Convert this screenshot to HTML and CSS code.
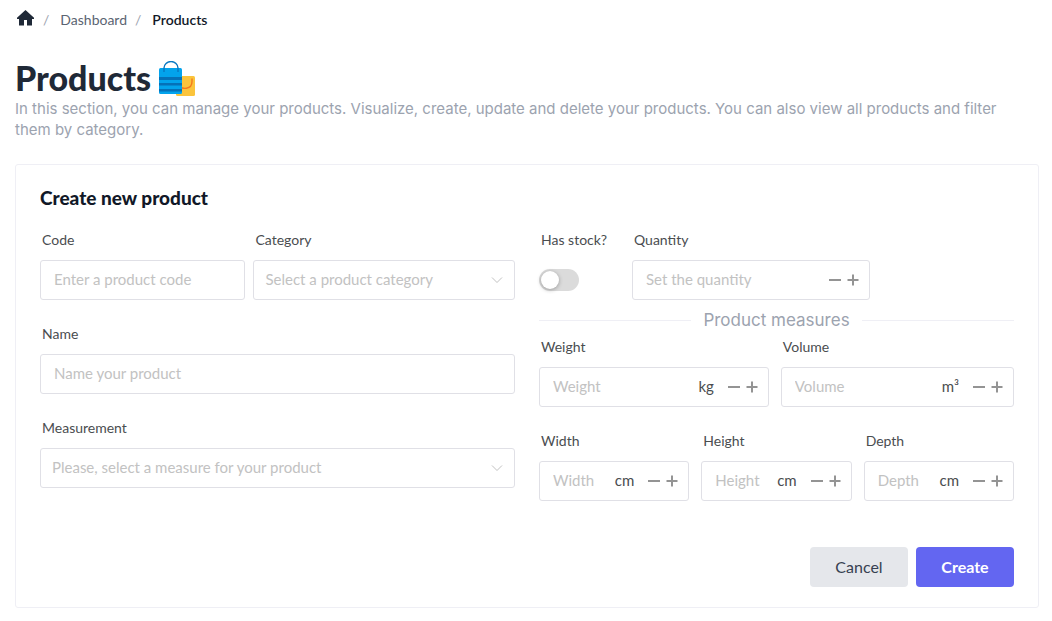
FILE: index.html
```html
<!DOCTYPE html>
<html lang="en">
<head>
<meta charset="utf-8">
<meta name="viewport" content="width=device-width, initial-scale=1">
<title>Products</title>
<link rel="stylesheet" href="styles.css">
</head>
<body>
<svg class="symbols" aria-hidden="true">
  <symbol id="minus" viewBox="0 0 18 18"><path d="M3 9h12" stroke="currentColor" stroke-width="2"/></symbol>
  <symbol id="plus" viewBox="0 0 18 18"><path d="M3.500 9h11M9 3.500v11" stroke="currentColor" stroke-width="2"/></symbol>
</svg>
<nav class="breadcrumb" aria-label="Breadcrumb">
  <a class="crumb home" href="#" aria-label="Home">
    <svg viewBox="0 0 20 20" width="20" height="20"><path fill="currentColor" d="M10.500 2 2 9.700V11h2v6.500h5V12h3v5.500h5V11h2V9.700z"/></svg>
  </a>
  <span class="slash">/</span>
  <a class="crumb" href="#">Dashboard</a>
  <span class="slash">/</span>
  <span class="crumb current" aria-current="page">Products</span>
</nav>
<header class="page-head">
  <div class="title-row">
    <h1 class="page-title">Products</h1>
    <svg class="bags" viewBox="0 0 36 36" width="36" height="36" aria-hidden="true">
      <rect x="17" y="15" width="19" height="20" rx="1.5" fill="#fbc43c"/>
      <path d="M33 17.500v3c0 8-10 9-14 3" fill="none" stroke="#f4791f" stroke-width="1.400"/>
      <rect x="0" y="7" width="23" height="26" rx="1.500" fill="#03a3ec"/>
      <path d="M0 16h23v3H0zM0 22h23v2.500H0zM0 28h23v2.500H0z" fill="#0571b8"/>
      <path d="M5 11V7a7 6.500 0 0 1 14 0v4" fill="none" stroke="#0878c2" stroke-width="1.400"/>
    </svg>
  </div>
  <p class="intro">In this section, you can manage your products. Visualize, create, update and delete your products. You can also view all products and filter them by category.</p>
</header>
<main class="card">
  <h2 class="card-title">Create new product</h2>
  <form class="form">
    <div class="columns">
      <div class="column">
        <div class="row tight">
          <div class="field code">
            <label class="label" for="code">Code</label>
            <div class="box"><input class="input" id="code" type="text" placeholder="Enter a product code"></div>
          </div>
          <div class="field category">
            <label class="label" for="category">Category</label>
            <div class="box pick">
              <select class="select" id="category"><option>Select a product category</option></select>
              <svg class="chevron" viewBox="0 0 12 12" width="12" height="12"><path d="M1 3.500l5 5 5-5" fill="none" stroke="currentColor"/></svg>
            </div>
          </div>
        </div>
        <div class="field-line">
          <label class="label" for="name">Name</label>
          <div class="box"><input class="input" id="name" type="text" placeholder="Name your product"></div>
        </div>
        <div class="field-line">
          <label class="label" for="measurement">Measurement</label>
          <div class="box pick">
            <select class="select" id="measurement"><option>Please, select a measure for your product</option></select>
            <svg class="chevron" viewBox="0 0 12 12" width="12" height="12"><path d="M1 3.500l5 5 5-5" fill="none" stroke="currentColor"/></svg>
          </div>
        </div>
      </div>
      <div class="column measures">
        <div class="row wide">
          <div class="field stock">
            <label class="label" for="stock">Has stock?</label>
            <div class="switch-line"><input class="switch" id="stock" type="checkbox" role="switch"></div>
          </div>
          <div class="field quantity">
            <label class="label" for="quantity">Quantity</label>
            <div class="box">
              <input class="input" id="quantity" type="text" inputmode="numeric" placeholder="Set the quantity">
              <span class="steps"><button class="step" type="button" aria-label="Decrease quantity"><svg width="18" height="18"><use href="#minus"/></svg></button><button class="step" type="button" aria-label="Increase quantity"><svg width="18" height="18"><use href="#plus"/></svg></button></span>
            </div>
          </div>
        </div>
        <div class="divider"><span class="divider-text">Product measures</span></div>
        <div class="row">
          <div class="field weight">
            <label class="label" for="weight">Weight</label>
            <div class="box">
              <input class="input" id="weight" type="text" inputmode="decimal" placeholder="Weight">
              <span class="unit">kg</span>
              <span class="steps"><button class="step" type="button" aria-label="Decrease weight"><svg width="18" height="18"><use href="#minus"/></svg></button><button class="step" type="button" aria-label="Increase weight"><svg width="18" height="18"><use href="#plus"/></svg></button></span>
            </div>
          </div>
          <div class="field volume">
            <label class="label" for="volume">Volume</label>
            <div class="box">
              <input class="input" id="volume" type="text" inputmode="decimal" placeholder="Volume">
              <span class="unit">m³</span>
              <span class="steps"><button class="step" type="button" aria-label="Decrease volume"><svg width="18" height="18"><use href="#minus"/></svg></button><button class="step" type="button" aria-label="Increase volume"><svg width="18" height="18"><use href="#plus"/></svg></button></span>
            </div>
          </div>
        </div>
        <div class="row sizes">
          <div class="field">
            <label class="label" for="width">Width</label>
            <div class="box">
              <input class="input" id="width" type="text" inputmode="decimal" placeholder="Width">
              <span class="unit">cm</span>
              <span class="steps"><button class="step" type="button" aria-label="Decrease width"><svg width="18" height="18"><use href="#minus"/></svg></button><button class="step" type="button" aria-label="Increase width"><svg width="18" height="18"><use href="#plus"/></svg></button></span>
            </div>
          </div>
          <div class="field">
            <label class="label" for="height">Height</label>
            <div class="box">
              <input class="input" id="height" type="text" inputmode="decimal" placeholder="Height">
              <span class="unit">cm</span>
              <span class="steps"><button class="step" type="button" aria-label="Decrease height"><svg width="18" height="18"><use href="#minus"/></svg></button><button class="step" type="button" aria-label="Increase height"><svg width="18" height="18"><use href="#plus"/></svg></button></span>
            </div>
          </div>
          <div class="field">
            <label class="label" for="depth">Depth</label>
            <div class="box">
              <input class="input" id="depth" type="text" inputmode="decimal" placeholder="Depth">
              <span class="unit">cm</span>
              <span class="steps"><button class="step" type="button" aria-label="Decrease depth"><svg width="18" height="18"><use href="#minus"/></svg></button><button class="step" type="button" aria-label="Increase depth"><svg width="18" height="18"><use href="#plus"/></svg></button></span>
            </div>
          </div>
        </div>
      </div>
    </div>
    <div class="actions">
      <button class="button cancel" type="button">Cancel</button>
      <button class="button create" type="submit">Create</button>
    </div>
  </form>
</main>
</body>
</html>
```
FILE: styles.css
```css
* { box-sizing: border-box; }
body {
  margin: 0;
  padding: 8px 13px 8px 15px;
  background: #fff;
  color: #4a4d50;
  font-family: Lato, sans-serif;
  font-size: 14px;
}
.symbols { display: none; }
.breadcrumb {
  display: flex;
  align-items: center;
  height: 24px;
  padding-bottom: 2px;
  font-size: 14px;
}
.crumb { color: #5b6472; text-decoration: none; }
.home { display: flex; color: #1f2937; padding-bottom: 2px; }
.slash { margin: 0 11px 0 8px; color: #9ca3af; }
.current { color: #111827; font-weight: 600; }
.page-head { margin: 26px 0 24px; }
.title-row { display: flex; align-items: center; gap: 8px; height: 40px; }
.bags { margin-top: 2px; }
.page-title {
  margin: 0;
  color: #1f2937;
  font-size: 34px;
  line-height: 40px;
  font-weight: 900;
}
.intro {
  margin: 0;
  padding-right: 8px;
  color: #9ca3af;
  font-family: Inter, sans-serif;
  font-size: 15px;
  line-height: 21px;
}
.card {
  padding: 20px 24px;
  border: 1px solid #efeff5;
  border-radius: 3px;
}
.card-title {
  margin: 0 0 20px;
  color: #111827;
  font-size: 19px;
  line-height: 25px;
  font-weight: 900;
}
.columns { display: grid; grid-template-columns: 1fr 1fr; gap: 24px; }
.column { display: flex; flex-direction: column; gap: 24px; min-width: 0; }
.measures { gap: 0; }
.row { display: flex; gap: 12px; }
.tight { gap: 8px; }
.wide { gap: 24px; }
.sizes { margin-top: 24px; }
.field { flex: 1 1 0; min-width: 0; }
.code { flex-grow: 44; }
.category { flex-grow: 56; }
.weight { flex-grow: 69; }
.volume { flex-grow: 70; }
.stock { flex: 0 0 69px; }
.quantity { flex: 0 0 50%; }
.label { display: block; height: 30px; padding-left: 2px; line-height: 20px; font-size: 14px; white-space: nowrap; }
.box {
  display: flex;
  align-items: center;
  height: 40px;
  padding: 0 7px 0 13px;
  border: 1px solid #e0e0e6;
  border-radius: 3px;
  font-size: 15px;
}
.input, .select {
  flex: 1;
  width: 0;
  min-width: 0;
  height: 38px;
  padding: 0 0 2px;
  border: 0;
  outline: 0;
  background: transparent;
  color: #333639;
  font: inherit;
}
.input::placeholder { color: #c2c2c2; opacity: 1; }
.pick { padding: 0 11px; }
.select { appearance: none; color: #c2c2c2; }
.chevron { color: #c2c2c2; }
.unit { margin: 0 11px 0 4px; padding-bottom: 2px; line-height: 20px; }
.steps { display: flex; }
.step { display: flex; padding: 0; border: 0; background: none; color: #949494; }
.switch-line { display: flex; align-items: center; height: 40px; }
.switch {
  appearance: none;
  display: flex;
  align-items: center;
  width: 40px;
  height: 22px;
  margin: 0;
  padding: 2px;
  border-radius: 11px;
  background: #dbdbdb;
}
.switch::before {
  content: "";
  width: 18px;
  height: 18px;
  border-radius: 50%;
  background: #fff;
  box-shadow: 0 1px 4px rgba(0, 0, 0, .3);
}
.switch:checked { justify-content: flex-end; background: #6366f1; }
.divider {
  display: flex;
  align-items: center;
  gap: 12px;
  height: 24px;
  margin: 8px 0 5px;
  color: #9ca3af;
  font-family: Inter, sans-serif;
  font-size: 17px;
}
.divider::before, .divider::after { content: ""; flex: 1; height: 1px; background: #efeff5; }
.actions { display: flex; justify-content: flex-end; gap: 8px; margin-top: 46px; }
.button {
  min-width: 98px;
  height: 40px;
  padding: 0 24px 2px;
  border: 0;
  border-radius: 4px;
  font: inherit;
  font-size: 16px;
}
.cancel { background: #e5e7eb; color: #374151; }
.create { background: #6366f1; color: #fff; font-weight: 700; }
```
